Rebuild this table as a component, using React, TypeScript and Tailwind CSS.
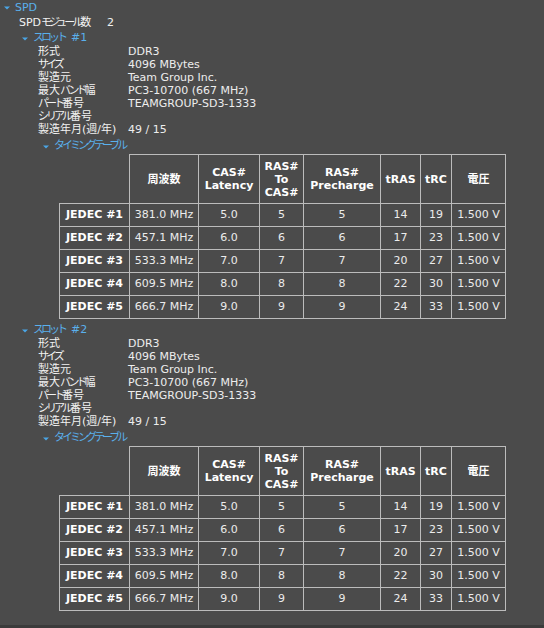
import React from "react";

const FONT = '"DejaVu Sans", "Noto Sans CJK JP", sans-serif';

type Prop = [string, string];

const props: Prop[] = [
  ["形式", "DDR3"],
  ["サイズ", "4096 MBytes"],
  ["製造元", "Team Group Inc."],
  ["最大バンド幅", "PC3-10700 (667 MHz)"],
  ["パート番号", "TEAMGROUP-SD3-1333"],
  ["シリアル番号", ""],
  ["製造年月(週/年)", "49 / 15"],
];

const rows = [
  ["JEDEC #1", "381.0 MHz", "5.0", "5", "5", "14", "19", "1.500 V"],
  ["JEDEC #2", "457.1 MHz", "6.0", "6", "6", "17", "23", "1.500 V"],
  ["JEDEC #3", "533.3 MHz", "7.0", "7", "7", "20", "27", "1.500 V"],
  ["JEDEC #4", "609.5 MHz", "8.0", "8", "8", "22", "30", "1.500 V"],
  ["JEDEC #5", "666.7 MHz", "9.0", "9", "9", "24", "33", "1.500 V"],
];

const headers = ["周波数", "CAS# Latency", "RAS# To CAS#", "RAS# Precharge", "tRAS", "tRC", "電圧"];

// katakana in the original UI font is much narrower than in Noto, squeeze it
function Jp({ text }: { text: string }) {
  const parts = text.split(/([\u30A0-\u30FF]+)/);
  return (
    <>
      {parts.map((p, i) =>
        /[\u30A0-\u30FF]/.test(p) ? (
          <span key={i} className="tracking-[-3px]">
            {p}
          </span>
        ) : (
          <React.Fragment key={i}>{p}</React.Fragment>
        )
      )}
    </>
  );
}

function Arrow() {
  return (
    <svg width="6" height="4" viewBox="0 0 6 4" className="shrink-0">
      <polygon points="0,0.5 6,0.5 3,3.5" fill="#4aa6e6" />
    </svg>
  );
}

function Node({ label, suffix, className }: { label: string; suffix?: string; className: string }) {
  return (
    <div className={`flex items-center gap-[5px] text-[#5ab0ec] ${className}`}>
      <Arrow />
      <span className="flex gap-[6px]">
        <span>
          <Jp text={label} />
        </span>
        {suffix && <span>{suffix}</span>}
      </span>
    </div>
  );
}

function TimingTable() {
  return (
    <div className="ml-[59px] grid grid-cols-[70px_69px_61px_44px_77px_40px_31px_55px] grid-rows-[49px_23px_23px_23px_23px_24px]">
      <div />
      {headers.map((h, i) => (
        <div
          key={h}
          className={`flex items-center justify-center border-l border-t border-[#bcbcbc] text-center font-bold leading-[13px] text-white ${
            i === headers.length - 1 ? "border-r" : ""
          }`}
        >
          {h}
        </div>
      ))}
      {rows.map((r, ri) =>
        r.map((c, ci) => (
          <div
            key={`${ri}-${ci}`}
            className={`flex items-center justify-center border-l border-t border-[#bcbcbc] ${
              ci === 0 ? "font-bold text-white" : "text-[#ececec]"
            } ${ci === r.length - 1 ? "border-r" : ""} ${ri === rows.length - 1 ? "border-b" : ""}`}
          >
            {c}
          </div>
        ))
      )}
    </div>
  );
}

function Slot({ n }: { n: number }) {
  return (
    <div className="flex flex-col">
      <Node label="スロット" suffix={`#${n}`} className="h-[15px] pl-[22px]" />
      {props.map(([k, v]) => (
        <div key={k} className="flex h-[13px] items-center pl-[38px]">
          <span className="w-[90px] shrink-0 text-[#f2f2f2]">
            <Jp text={k} />
          </span>
          <span className="text-[#ededed]">{v}</span>
        </div>
      ))}
      <Node label="タイミングテーブル" className="h-[17px] pl-[43px] pt-[2px]" />
      <TimingTable />
    </div>
  );
}

export default function App() {
  return (
    <div
      className="flex h-[628px] w-[544px] flex-col overflow-hidden bg-[#4b4b4b] text-[11px]"
      style={{ fontFamily: FONT }}
    >
      <div className="flex flex-1 flex-col">
        <Node label="SPD" className="h-[16px] pl-[4px]" />
        <div className="flex h-[15px] items-center pl-[19px] text-[#f2f2f2]">
          <span className="w-[88px] shrink-0">
            <Jp text="SPDモジュール数" />
          </span>
          <span>2</span>
        </div>
        <Slot n={1} />
        <div className="h-[4px]" />
        <Slot n={2} />
      </div>
      <div className="h-[3px] bg-[#3b3b3b]" />
    </div>
  );
}
